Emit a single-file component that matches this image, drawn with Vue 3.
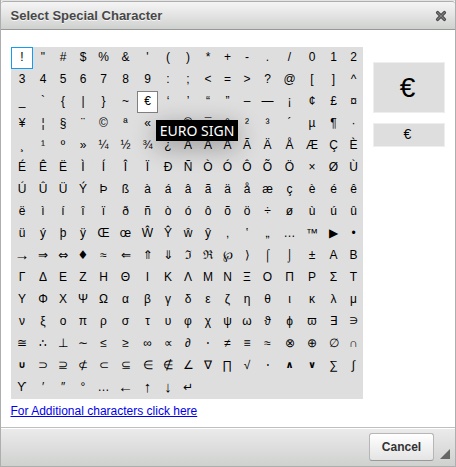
<script setup>
const rows = [
  '!"#$%&\'()*+-./012',
  '3456789:;<=>?@[]^',
  '_`{|}~€‘’“”–—¡¢£¤',
  '¥¦§¨©ª«¬®¯°²³´µ¶·',
  '¸¹º»¼½¾¿ÀÁÂÃÄÅÆÇÈ',
  'ÉÊËÌÍÎÏÐÑÒÓÔÕÖ×ØÙ',
  'ÚÛÜÝÞßàáâãäåæçèéê',
  'ëìíîïðñòóôõö÷øùúû',
  'üýþÿŒœŴŶŵŷ‚‛„…™▶•',
  '→⇒⇔♦≈⇐⇑⇓ℑℜ℘⟩⌠⌡±ΑΒ',
  'ΓΔΕΖΗΘΙΚΛΜΝΞΟΠΡΣΤ',
  'ΥΦΧΨΩαβγδεζηθικλμ',
  'νξοπρστυφχψωϑϕϖ∃∋',
  '≅∴⊥∼≤≥∞∝∂⋅≠≡≈⊗⊕∅∩',
  '∪⊃⊇⊄⊂⊆∈∉∠∇∏√⋅∧∨∑∫',
  'ϒ′″°…←↑↓↵',
]
const cells = rows.flatMap((row) => [...row])

const kind = (c) => ({
  focused: c === '!',
  hovered: c === '€',
  arrow: '→←↑↓'.includes(c),
  double: '⇔⇑⇓'.includes(c),
  solid: '♦▶↵∃'.includes(c),
  logic: '∧∨∪'.includes(c),
  member: c === '∋',
})
</script>

<template>
  <div class="dialog">
    <header class="title">
      <span>Select Special Character</span>
      <svg class="close" width="12" height="12" viewBox="0 0 12 12">
        <path class="edge" d="M2.6 2.6 9.4 9.4M9.4 2.6 2.6 9.4" />
        <path class="core" d="M2.6 2.6 9.4 9.4M9.4 2.6 2.6 9.4" />
      </svg>
    </header>
    <main class="body">
      <div class="left">
        <div class="grid">
          <span
            v-for="(c, i) in cells"
            :key="i"
            class="cell"
            :class="kind(c)"
          >{{ c }}<span v-if="c === '€'" class="tip">EURO SIGN</span></span>
        </div>
        <a class="more" href="#">For Additional characters click here</a>
      </div>
      <div class="previews">
        <div class="preview big">€</div>
        <div class="preview small">€</div>
      </div>
    </main>
    <footer class="foot">
      <button class="cancel">Cancel</button>
      <svg class="grip" width="10" height="10" viewBox="0 0 10 10"><path d="M10 0V10H0z" /></svg>
    </footer>
  </div>
</template>

<style>
body { background: #ececec; margin: 0; }
</style>
<style scoped>
.dialog {
  box-sizing: border-box;
  width: 456px;
  height: 467px;
  display: flex;
  flex-direction: column;
  border: 1px solid #aeaeae;
  border-top: 0;
  font-family: "Liberation Sans", Arial, sans-serif;
  font-size: 12px;
  color: #000;
  padding-top: 1px;
  background: linear-gradient(#e4e4e4 1px, #fff 1px);
}
.title {
  box-sizing: border-box;
  height: 29px;
  display: flex;
  align-items: center;
  justify-content: space-between;
  padding: 0 8px 0 9.5px;
  border-top: 1px solid #aeaeae;
  border-bottom: 1px solid #999;
  border-radius: 3px 3px 0 0;
  background: linear-gradient(#f5f5f5, #cfd1cf);
  font-size: 13px;
  font-weight: bold;
  color: #474747;
  text-shadow: 0 1px 0 rgba(255, 255, 255, 0.75);
}
.close { fill: none; stroke-linecap: round; }
.edge { stroke: #4a4a4a; stroke-width: 3.4; }
.core { stroke: #808080; stroke-width: 1.2; }
.body {
  flex: 1;
  display: flex;
  align-items: flex-start;
  gap: 10px;
  padding: 17px 10px 0;
}
.grid {
  width: 352px;
  display: grid;
  grid-template-columns: 22px 20px 20px 20px 21px 23px 21px 20px 20px 20px 19px 20px 21px 23px 22px 21px 19px;
  grid-auto-rows: 22px;
  background: #dedede;
}
.cell {
  position: relative;
  display: flex;
  align-items: center;
  justify-content: center;
  line-height: 14px;
  box-sizing: border-box;
  padding-bottom: 2px;
}
.focused { background: #fff; border: 1px solid #169cee; }
.hovered { background: #fff; border: 1px solid #808080; z-index: 1; }
.arrow { font-family: "Liberation Serif", serif; font-size: 15px; }
.double { font-family: "DejaVu Sans", sans-serif; font-size: 12px; }
.solid { font-family: "DejaVu Sans", sans-serif; font-size: 12px; }
.logic { font-family: "DejaVu Sans", sans-serif; font-size: 10px; font-weight: bold; }
.member { font-family: "DejaVu Sans", sans-serif; font-size: 10px; }
.tip {
  position: absolute;
  left: 18px;
  top: 28px;
  width: 82px;
  height: 21px;
  line-height: 22px;
  text-align: center;
  white-space: nowrap;
  background: #000;
  color: #fff;
  font-family: "Noto Sans", "Open Sans", sans-serif;
  font-size: 14px;
  box-shadow: 0 6px 24px rgba(0, 0, 0, 0.32);
}
.more { display: block; margin: 5px 0 0 -0.5px; line-height: 14px; font-size: 12px; color: #00e; white-space: nowrap; }
.previews { display: flex; flex-direction: column; gap: 10px; padding-top: 15px; }
.preview {
  box-sizing: border-box;
  width: 72px;
  display: flex;
  align-items: center;
  justify-content: center;
  padding-right: 3px;
  border: 1px solid #eee;
  background: #dedede;
}
.big { height: 51px; font-size: 28px; }
.small { height: 24px; padding-bottom: 2px; font-size: 14px; }
.foot {
  box-sizing: border-box;
  height: 39px;
  display: flex;
  justify-content: flex-end;
  padding: 5px 5px 0 0;
  border-top: 1px solid #bfbfbf;
  box-shadow: inset 0 1px 0 #fff;
  background: linear-gradient(#ebebeb, #cfd1cf);
}
.cancel {
  box-sizing: border-box;
  width: 65px;
  height: 28px;
  padding: 0;
  border: 1px solid #b6b6b6;
  border-bottom-color: #999;
  border-radius: 3px;
  background: linear-gradient(#fff, #e4e4e4);
  font: bold 12px "Liberation Sans", Arial, sans-serif;
  color: #333;
}
.grip { margin: 16px 0 0 6px; fill: #666; }
</style>
